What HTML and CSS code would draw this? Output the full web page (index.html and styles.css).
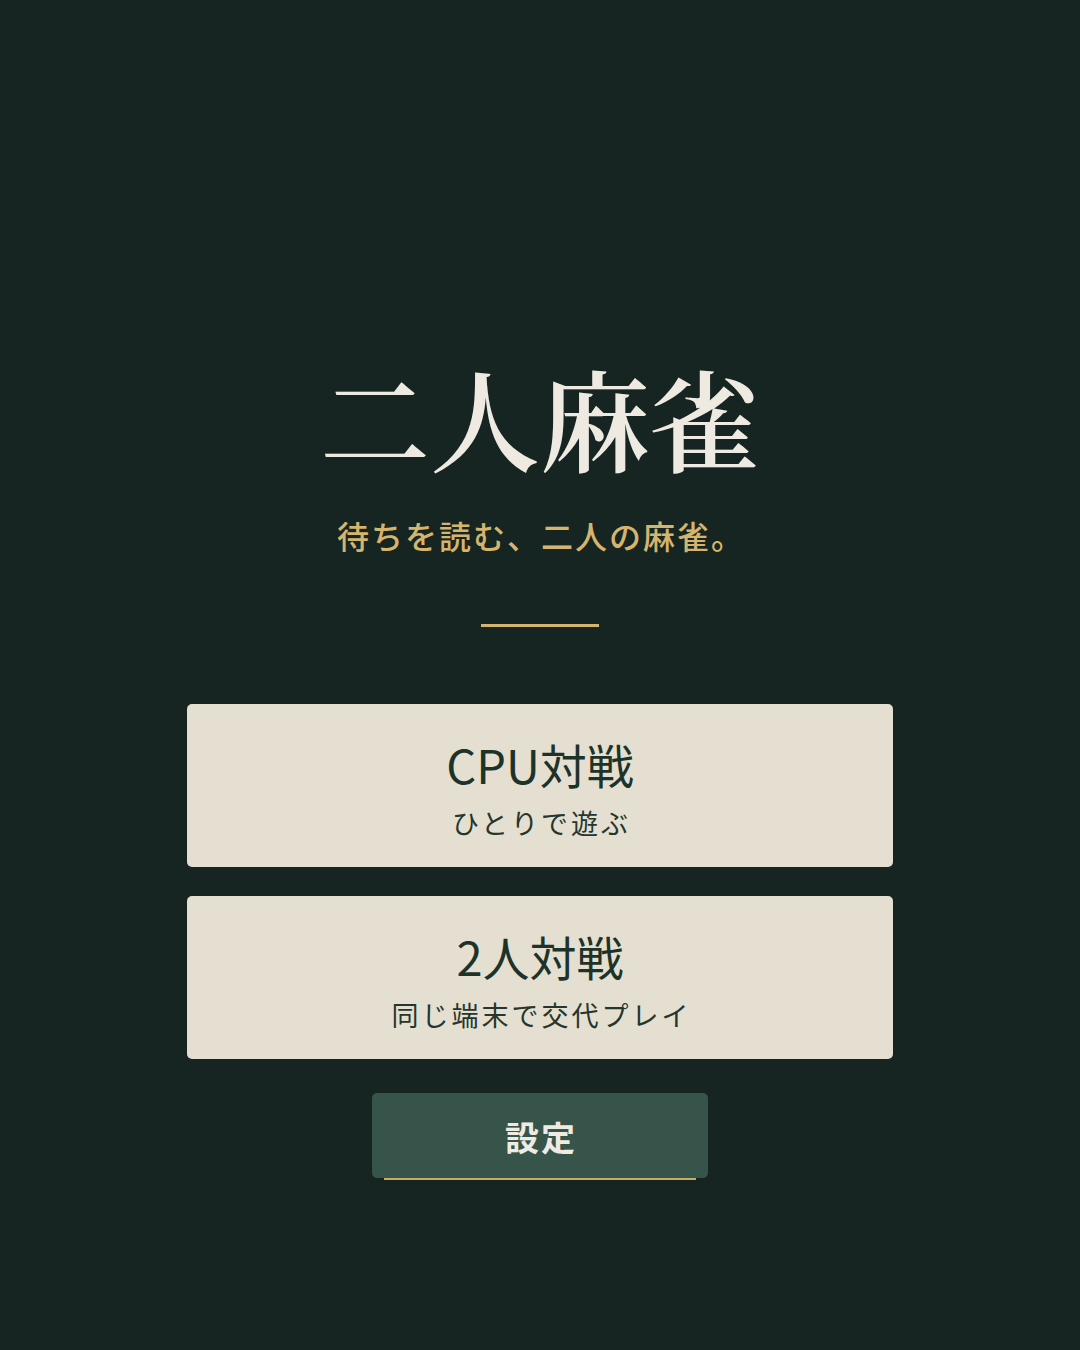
FILE: index.html
```html
<!DOCTYPE html>
<html lang="ja">
<head>
    <meta charset="UTF-8">
    <meta name="viewport" content="width=device-width, initial-scale=1.0">
    <title>二人麻雀</title>
    <link rel="stylesheet" href="styles.css">
</head>
<body>
    <main class="screen">
        <h1 class="title">二人麻雀</h1>
        <p class="tagline">待ちを読む、二人の麻雀。</p>
        <div class="divider"></div>
        <div class="menu">
            <button class="mode-card" type="button">
                <span class="mode-name">CPU対戦</span>
                <span class="mode-desc">ひとりで遊ぶ</span>
            </button>
            <button class="mode-card" type="button">
                <span class="mode-name">2人対戦</span>
                <span class="mode-desc">同じ端末で交代プレイ</span>
            </button>
        </div>
        <button class="settings-btn" type="button">設定</button>
    </main>
</body>
</html>
```

FILE: styles.css
```css
body {
    margin: 0;
    background-color: #172522;
    font-family: "Noto Sans CJK JP", "Noto Sans", sans-serif;
    min-height: 100vh;
}
.screen {
    display: flex;
    flex-direction: column;
    align-items: center;
    padding-top: 361px;
}
.title {
    margin: 0;
    font-family: "Noto Serif CJK JP", "Noto Serif JP", serif;
    font-size: 110px;
    line-height: 1;
    font-weight: 600;
    color: #eeeae2;
}
.tagline {
    margin: 48px 0 0;
    padding-left: 2px;
    font-size: 32px;
    line-height: 1;
    font-weight: 500;
    letter-spacing: 2px;
    color: #d5b56d;
}
.divider {
    width: 118px;
    height: 3px;
    margin-top: 73px;
    background-color: #d5b56d;
}
.menu {
    display: flex;
    flex-direction: column;
    gap: 29px;
    margin-top: 77px;
}
.mode-card {
    display: flex;
    flex-direction: column;
    align-items: center;
    justify-content: center;
    width: 706px;
    height: 163px;
    padding: 4px 0 0;
    border: none;
    border-radius: 5px;
    background-color: #e5dfd1;
    font-family: inherit;
    cursor: pointer;
}
.mode-name {
    font-size: 47px;
    line-height: 1;
    color: #1d3329;
}
.mode-desc {
    margin-top: 22px;
    padding-left: 3px;
    font-size: 27px;
    line-height: 1;
    letter-spacing: 3px;
    color: #24362e;
}
.settings-btn {
    position: relative;
    width: 336px;
    height: 85px;
    margin-top: 34px;
    padding: 2px 0 0 2px;
    border: none;
    border-radius: 5px;
    background-color: #365449;
    color: #efebe2;
    font-family: inherit;
    font-size: 34px;
    font-weight: 700;
    letter-spacing: 2px;
    cursor: pointer;
}
.settings-btn::after {
    content: "";
    position: absolute;
    left: 12px;
    right: 12px;
    bottom: -2px;
    height: 2px;
    background-color: #c9ab66;
}
```
